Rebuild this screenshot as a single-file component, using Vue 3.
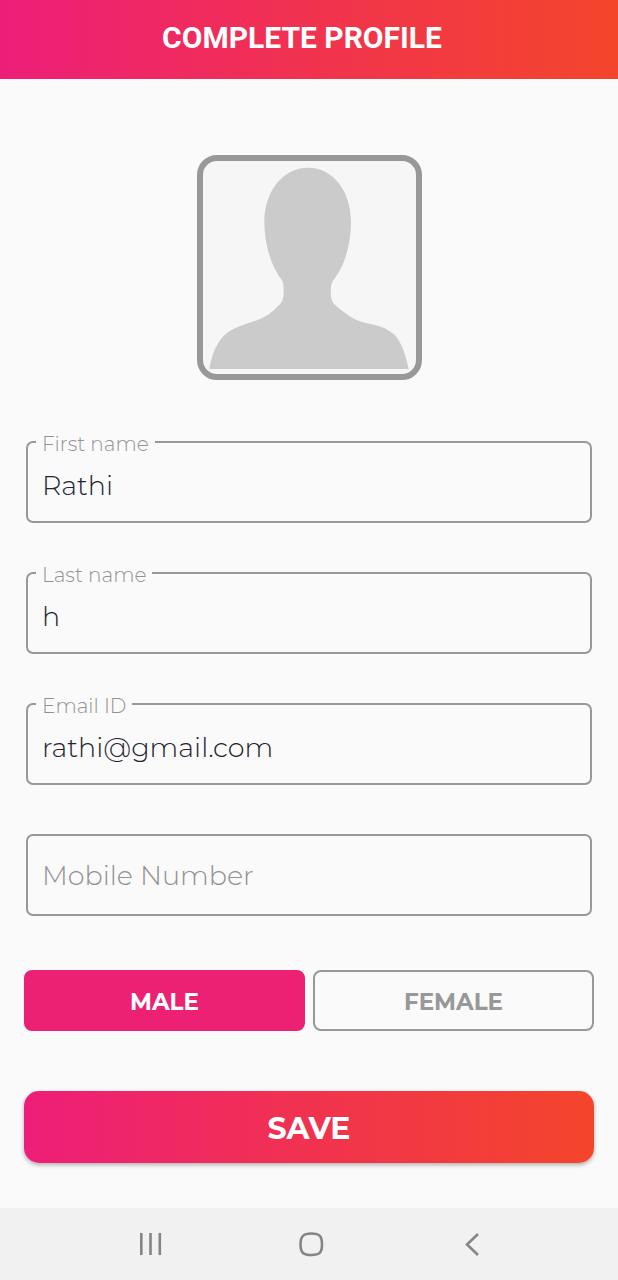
<script setup>
import { reactive, ref } from 'vue'

const fields = [
  { id: 'firstName', label: 'First name', type: 'text' },
  { id: 'lastName', label: 'Last name', type: 'text' },
  { id: 'email', label: 'Email ID', type: 'email' },
  { id: 'mobile', label: 'Mobile Number', type: 'tel' },
]
const form = reactive({
  firstName: 'Rathi',
  lastName: 'h',
  email: 'rathi@gmail.com',
  mobile: '',
})
const genders = ['MALE', 'FEMALE']
const gender = ref('MALE')
</script>

<template>
  <div class="screen">
    <header class="topbar">
      <h1>COMPLETE PROFILE</h1>
    </header>

    <main>
      <button class="avatar" type="button" aria-label="Change profile photo">
        <svg viewBox="0 0 639 639" aria-hidden="true">
          <path
            d="M19 624C31 560 53 518 103 499C151 479 186 477 223 437C244 422 243 398 241 374C241 356 233 356 224 339C200 299 184 242 184 184C184 88 242 20 315 20C389 20 444 88 444 184C444 242 429 299 404 339C395 354 385 362 384 378C382 404 383 421 400 435C430 460 452 478 492 487C532 494 556 505 576 523C600 551 608 586 617 624Z"
          />
        </svg>
      </button>

      <form @submit.prevent>
        <div class="fields">
          <div v-for="f in fields" :key="f.id" class="field" :class="{ filled: form[f.id] }">
            <label :for="f.id">{{ f.label }}</label>
            <input :id="f.id" v-model="form[f.id]" :type="f.type" />
          </div>
        </div>

        <div class="genders" role="group" aria-label="Gender">
          <button
            v-for="g in genders"
            :key="g"
            type="button"
            :class="{ selected: gender === g }"
            :aria-pressed="gender === g"
            @click="gender = g"
          >
            {{ g }}
          </button>
        </div>

        <button class="save" type="submit">SAVE</button>
      </form>
    </main>

    <nav class="system-nav" aria-label="System navigation">
      <button type="button" aria-label="Recent apps">
        <svg viewBox="0 0 32 32" aria-hidden="true">
          <path d="M7.300 5V27M16.500 5V27M25.800 5V27" />
        </svg>
      </button>
      <button type="button" aria-label="Home">
        <svg viewBox="0 0 32 32" aria-hidden="true">
          <path d="M15.500 5.500C23.500 5.500 26 8 26 16.500S23.500 27 15.500 27S4.500 25 4.500 16.500S7.500 5.500 15.500 5.500Z" />
        </svg>
      </button>
      <button type="button" aria-label="Back">
        <svg viewBox="0 0 32 32" aria-hidden="true">
          <path d="M21 6L10 16.500L21 27" />
        </svg>
      </button>
    </nav>
  </div>
</template>

<style>
body {
  background: #fafafa;
}
</style>

<style scoped>
.screen {
  box-sizing: border-box;
  min-height: 100vh;
  display: flex;
  flex-direction: column;
  background: #fafafa;
  font-family: Montserrat, Inter, 'Liberation Sans', sans-serif;
}

button {
  padding: 0;
  border: 0;
  background: none;
  font-family: inherit;
  cursor: pointer;
}

.topbar {
  height: 79px;
  display: flex;
  align-items: center;
  justify-content: center;
  padding: 0 14px 4px 0;
  box-sizing: border-box;
  background: linear-gradient(90deg, #ed1e79, #f1324f 50%, #f4452b);
}

h1 {
  margin: 0;
  color: #fff;
  font: 700 30px/36px Roboto, sans-serif;
}

main {
  flex: 1;
  display: flex;
  flex-direction: column;
  padding: 76px 24px 45px;
}

.avatar {
  align-self: center;
  box-sizing: border-box;
  width: 225px;
  height: 225px;
  border: 6px solid #989898;
  border-radius: 20px;
  background: #f6f6f6;
  overflow: hidden;
}

.avatar svg {
  display: block;
  width: 100%;
  fill: #cbcbcb;
}

.fields {
  display: flex;
  flex-direction: column;
  gap: 49px;
  margin: 61px 2px 0;
}

.field {
  position: relative;
  height: 82px;
  box-sizing: border-box;
  border: 2px solid #989898;
  border-radius: 7px;
}

.field label {
  position: absolute;
  top: 24px;
  left: 8px;
  padding: 0 6px;
  color: #929292;
  background: #fafafa;
  font-size: 27px;
  font-weight: 350;
  line-height: 32px;
  pointer-events: none;
}

.field.filled label {
  top: -12px;
  font-size: 20px;
  line-height: 26px;
}

.field input {
  width: 100%;
  height: 100%;
  box-sizing: border-box;
  padding: 6px 14px 0;
  border: 0;
  outline: 0;
  background: transparent;
  color: #22252f;
  font: 350 27px/36px Montserrat, Inter, 'Liberation Sans', sans-serif;
}

.genders {
  display: flex;
  gap: 8px;
  margin-top: 54px;
}

.genders button {
  flex: 1;
  height: 61px;
  padding-top: 2px;
  border: 2px solid #989898;
  border-radius: 8px;
  color: #989898;
  font-size: 23px;
  font-weight: 700;
}

.genders .selected {
  border-color: #ed2173;
  background: #ed2173;
  color: #fff;
}

.save {
  display: block;
  width: 100%;
  height: 72px;
  margin-top: 60px;
  padding-top: 2px;
  border-radius: 15px;
  background: linear-gradient(90deg, #ed1e79, #f1324f 50%, #f4452b);
  box-shadow: 0 2px 4px rgba(0, 0, 0, 0.3);
  color: #fff;
  font-size: 30px;
  font-weight: 700;
}

.system-nav {
  height: 72px;
  display: flex;
  align-items: center;
  justify-content: space-between;
  padding: 0 129px 0 134px;
  background: #f1f1f1;
}

.system-nav svg {
  display: block;
  width: 32px;
  height: 32px;
  fill: none;
  stroke: #858585;
  stroke-width: 2.600;
}
</style>
